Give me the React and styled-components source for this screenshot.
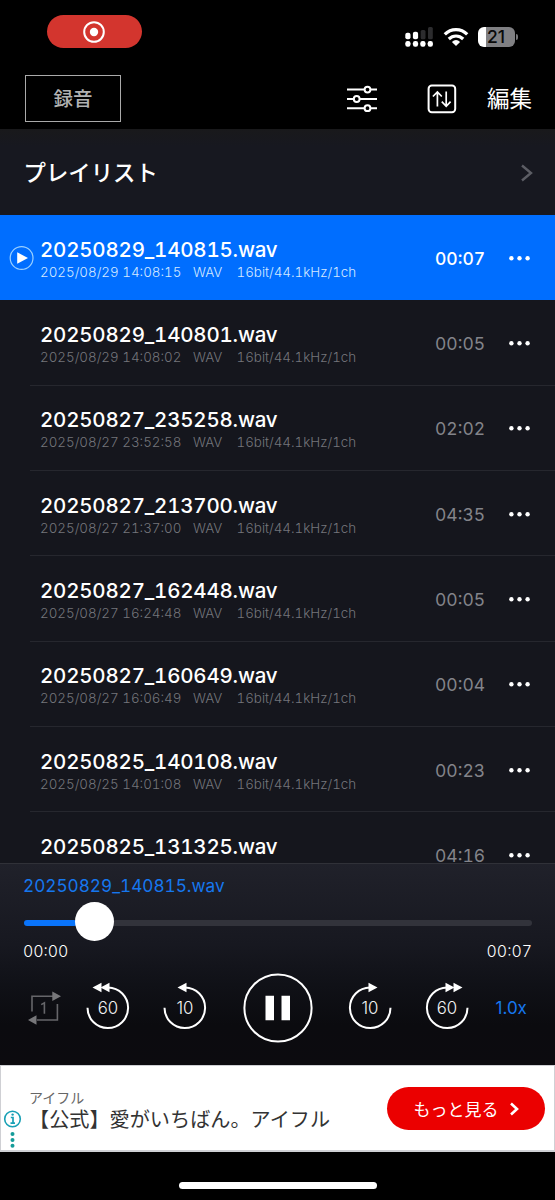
import React from "react";
import styled, { createGlobalStyle } from "styled-components";

const GlobalStyle = createGlobalStyle`
  *, *::before, *::after { box-sizing: border-box; }
  body { margin: 0; background: #000; }
  button { font: inherit; color: inherit; background: none; border: 0; padding: 0; margin: 0; }
  svg { display: block; flex: none; }
`;

const Screen = styled.main`
  width: 555px;
  height: 1200px;
  display: flex;
  flex-direction: column;
  overflow: hidden;
  background: #000;
  color: #fff;
  font-family: Inter, "Noto Sans CJK JP", sans-serif;
  white-space: nowrap;
`;

const StatusBar = styled.div`
  height: 64px;
  flex: none;
  display: flex;
  justify-content: space-between;
  padding: 15px 37px 0 47px;
`;

const RecordingPill = styled.div`
  width: 95px;
  height: 33px;
  border-radius: 17px;
  background: #d3352e;
  display: flex;
  align-items: center;
  justify-content: center;
  padding-right: 1px;
`;

const StatusIcons = styled.div`
  display: flex;
  align-items: flex-start;
  padding-top: 12px;
`;

const Battery = styled.div`
  width: 37px;
  height: 20px;
  margin-left: 9px;
  padding-left: 9px;
  border-radius: 6px;
  background: linear-gradient(90deg, #fff 8px, #808083 8px);
  color: #0a0a0a;
  font-size: 17.5px;
  font-weight: 500;
  line-height: 20px;
`;

const BatteryCap = styled.div`
  width: 2px;
  height: 6px;
  margin: 7px 0 0 1px;
  border-radius: 0 2px 2px 0;
  background: #77777a;
`;

const NavBar = styled.header`
  height: 65px;
  flex: none;
  display: flex;
  align-items: center;
  padding: 4px 23px 0 25px;
`;

const RecordButton = styled.button`
  width: 96px;
  height: 47px;
  border: 1.5px solid #aaa;
  color: #b2b2b2;
  font-size: 19.5px;
  font-weight: 500;
  line-height: 44px;
`;

const NavTools = styled.div`
  margin-left: auto;
  display: flex;
  align-items: center;
`;

const EditButton = styled.button`
  margin-left: 30px;
  font-size: 22.5px;
  line-height: 32px;
`;

const PlaylistRow = styled.div`
  height: 86px;
  flex: none;
  display: flex;
  align-items: center;
  justify-content: space-between;
  padding: 1px 22px 0 23.5px;
  background: linear-gradient(#19191b, #171820 20%, #171820);
`;

const PlaylistTitle = styled.h1`
  margin: 0;
  font-size: 22.4px;
  font-weight: 500;
  line-height: 32px;
`;

const FileList = styled.ul`
  list-style: none;
  margin: 0;
  padding: 0;
  height: 648px;
  flex: none;
  overflow: hidden;
  background: #15161d;
`;

const FileRow = styled.li`
  height: 85.33px;
  display: grid;
  grid-template-columns: 40px 395px 74px 24px;
  align-items: center;
  background: ${(p) =>
    p.$active
      ? "#006eff"
      : "linear-gradient(#26272e, #26272e) 30px 100% / 525px 1px no-repeat"};
`;

const PlaySlot = styled.div`
  padding-left: 9px;
`;

const FileInfo = styled.div`
  padding-top: 3px;
`;

const FileName = styled.div`
  font-size: 20.5px;
  font-weight: 500;
  line-height: 25px;
  letter-spacing: -0.19px;
  font-variant-numeric: tabular-nums;
`;

const FileMeta = styled.div`
  display: grid;
  grid-template-columns: 153px 43.5px auto;
  font-size: 13.4px;
  font-weight: 300;
  line-height: 20px;
  font-variant-numeric: tabular-nums;
  color: ${(p) => (p.$active ? "#d5e9ff" : "#74757b")};
`;

const Duration = styled.div`
  padding-top: 1px;
  font-size: 17.5px;
  font-weight: ${(p) => (p.$active ? 500 : 400)};
  font-variant-numeric: tabular-nums;
  color: ${(p) => (p.$active ? "#fff" : "#83848a")};
`;

const Player = styled.section`
  height: 202px;
  flex: none;
  border-top: 1px solid #303138;
  padding: 9px 23px 0;
  background: linear-gradient(#20212a, #171820 40%, #101117 60%, #0b0b0f 80%, #0c0b0f);
`;

const NowPlaying = styled.div`
  color: #1677ee;
  font-size: 17.2px;
  line-height: 26px;
  font-variant-numeric: tabular-nums;
`;

const Slider = styled.div`
  height: 39px;
  margin: 3px 0 0 1px;
  display: flex;
  align-items: center;
`;

const Track = styled.div`
  height: 6px;
  margin-top: 3px;
  border-radius: 3px;
  background: ${(p) => (p.$played ? "#0a74fa" : "#32333b")};
  width: ${(p) => (p.$played ? "53px" : "auto")};
  flex: ${(p) => (p.$played ? "none" : "1")};
`;

const Knob = styled.div`
  width: 39px;
  height: 39px;
  margin: 0 -2px;
  border-radius: 50%;
  background: #fff;
  flex: none;
  z-index: 1;
`;

const Times = styled.div`
  display: flex;
  justify-content: space-between;
  margin-top: 1px;
  font-size: 15.9px;
  font-weight: 300;
  line-height: 20px;
  font-variant-numeric: tabular-nums;
`;

const Controls = styled.div`
  display: flex;
  align-items: center;
  height: 70px;
  margin-top: 10.5px;
  padding-left: 4px;
`;

const Control = styled.button`
  margin-left: ${(p) => p.$gap}px;
  flex: none;
`;

const Speed = styled.button`
  margin-left: 26.5px;
  color: #1677ee;
  font-size: 17px;
`;

const SkipLabel = styled.text`
  fill: #f4f4f4;
  font-size: 16.8px;
  font-weight: 300;
  text-anchor: middle;
`;

const AdBanner = styled.aside`
  height: 87px;
  flex: none;
  display: flex;
  background: #fff;
  border: solid #cfd0d4;
  border-width: 1px 1px 2px 1px;
  color: #333;
  font-family: "Noto Sans CJK JP", sans-serif;
`;

const AdMarks = styled.div`
  width: 28px;
  padding: 43.5px 0 0 2px;
`;

const AdCopy = styled.div`
  width: 358px;
  padding-top: 22px;
`;

const Advertiser = styled.div`
  font-size: 14px;
  line-height: 18px;
  color: #666;
`;

const AdTitle = styled.div`
  font-size: 20.15px;
  line-height: 25px;
`;

const AdButton = styled.button`
  width: 158px;
  height: 43px;
  margin-top: 21px;
  border-radius: 22px;
  background: #eb0000;
  color: #fff;
  display: flex;
  align-items: center;
  justify-content: center;
  gap: 10px;
  font-size: 17px;
`;

const HomeIndicator = styled.div`
  width: 198px;
  height: 7px;
  margin: 30px 0 0 179px;
  border-radius: 4px;
  background: #fff;
`;

const files = [
  ["20250829_140815.wav", "2025/08/29 14:08:15", "00:07"],
  ["20250829_140801.wav", "2025/08/29 14:08:02", "00:05"],
  ["20250827_235258.wav", "2025/08/27 23:52:58", "02:02"],
  ["20250827_213700.wav", "2025/08/27 21:37:00", "04:35"],
  ["20250827_162448.wav", "2025/08/27 16:24:48", "00:05"],
  ["20250827_160649.wav", "2025/08/27 16:06:49", "00:04"],
  ["20250825_140108.wav", "2025/08/25 14:01:08", "00:23"],
  ["20250825_131325.wav", "2025/08/25 13:13:25", "04:16"],
];

function RecordIcon() {
  return (
    <svg width="24" height="24" fill="none">
      <circle cx="12" cy="12" r="9.8" stroke="#fff" strokeWidth="2" />
      <circle cx="12" cy="12" r="4.2" fill="#fff" />
    </svg>
  );
}

function SignalIcon() {
  return (
    <svg width="28" height="21" fill="#fff">
      <rect x="0.3" y="5.8" width="5.2" height="6.5" rx="2" />
      <rect x="7.9" y="4.8" width="5.2" height="7.5" rx="2" />
      <rect x="15.7" y="3" width="4.8" height="9.3" rx="1.5" fill="#2c2c2e" />
      <rect x="23" y="0" width="4.8" height="12.3" rx="1.5" fill="#2c2c2e" />
      {[0.3, 7.9, 15.3, 22.7].map((x) => (
        <rect key={x} x={x} y="14" width="5.2" height="5.8" rx="2.2" />
      ))}
    </svg>
  );
}

function WifiIcon() {
  return (
    <svg width="26" height="21" fill="none" stroke="#fff" strokeWidth="3.2">
      <path d="M1.8 7.4C8 1 18 1 24.2 7.4" />
      <path d="M5.8 12C10 8 16 8 20.2 12" />
      <path d="M13 19L8.9 15Q13 11.2 17.1 15Z" fill="#fff" stroke="none" />
    </svg>
  );
}

function SlidersIcon() {
  return (
    <svg width="32" height="28" fill="none" stroke="#fff" strokeWidth="2">
      <path d="M0 4.6H17M24 4.6H30M0 14H6M13 14H30M0 23.2H17M24 23.2H30" />
      <circle cx="20.5" cy="4.6" r="2.9" />
      <circle cx="9.7" cy="14" r="2.9" />
      <circle cx="20.5" cy="23.2" r="2.9" />
    </svg>
  );
}

function SortIcon() {
  return (
    <svg width="30" height="30" fill="none" stroke="#fff">
      <rect x="1.6" y="1.6" width="26.6" height="26.6" rx="3.2" strokeWidth="2" />
      <path d="M10.4 22.5V8.2M5.9 12.5L10.4 7.9L14.8 12.5M19.2 7.5V22M14.8 17.7L19.2 22.3L23.6 17.7" strokeWidth="1.7" />
    </svg>
  );
}

function Chevron({ width, height, color, stroke }) {
  return (
    <svg width={width} height={height} fill="none" stroke={color} strokeWidth={stroke}>
      <path d={`M2 1.5L${width - 2} ${height / 2}L2 ${height - 1.5}`} />
    </svg>
  );
}

function PlayingIcon() {
  return (
    <svg width="26" height="26" fill="none">
      <circle cx="12.6" cy="13" r="11.4" stroke="#9bd1ff" strokeWidth="1.2" />
      <path d="M8.2 7.3L19 13L8.2 18.7Z" fill="#fff" />
    </svg>
  );
}

function MoreIcon() {
  return (
    <svg width="24" height="6" fill="#fff">
      <circle cx="2.4" cy="3.2" r="2.2" />
      <circle cx="10.5" cy="3.2" r="2.2" />
      <circle cx="18.6" cy="3.2" r="2.2" />
    </svg>
  );
}

function RepeatIcon() {
  return (
    <svg width="34" height="34" fill="none" stroke="#66666a" strokeWidth="1.6">
      <path d="M5 20.5V5.2H26M30.4 13V29H10" />
      <path d="M25.3 0.5L34 5.3L25.3 10ZM9.5 24.2L1 29L9.5 33.7Z" fill="#77777a" stroke="none" />
      <path d="M14.2 13.6L17.4 11.8V22.8" />
    </svg>
  );
}

function SkipIcon({ seconds, forward }) {
  const double = seconds === 60;
  return (
    <svg width="44" height="51" fill="none">
      <g transform={forward ? "matrix(-1 0 0 1 44 0)" : undefined}>
        <path d="M1.5 25.7A20.3 20.3 0 1 0 22 5.5H18" stroke="#fff" strokeWidth="2" />
        <path d="M14.5 5.5L23.5 0.7V10.3Z" fill="#fff" />
        {double && <path d="M6.5 5.5L15.5 0.7V10.3Z" fill="#fff" />}
      </g>
      <SkipLabel x="22" y="32">{seconds}</SkipLabel>
    </svg>
  );
}

function PauseIcon() {
  return (
    <svg width="70" height="70" fill="none">
      <circle cx="35" cy="35" r="33.6" stroke="#fff" strokeWidth="2" />
      <path d="M22.5 22.7H31V47.3H22.5ZM38.5 22.7H47V47.3H38.5Z" fill="#fff" />
    </svg>
  );
}

function AdChoiceIcon() {
  return (
    <svg width="20" height="40" fill="none">
      <circle cx="9.5" cy="9" r="7.8" stroke="#18a0b5" strokeWidth="1.6" />
      <path d="M7.8 7.5H10V13M7.5 13.2H12" stroke="#18a0b5" strokeWidth="1.7" />
      <circle cx="9.6" cy="4.6" r="1.2" fill="#18a0b5" />
      <g fill="#159c99">
        <circle cx="9.5" cy="24" r="2" />
        <circle cx="9.5" cy="30" r="2" />
        <circle cx="9.5" cy="35.7" r="2" />
      </g>
    </svg>
  );
}

export default function App() {
  return (
    <Screen>
      <GlobalStyle />
      <StatusBar>
        <RecordingPill><RecordIcon /></RecordingPill>
        <StatusIcons>
          <SignalIcon />
          <Control as="span" $gap={10}><WifiIcon /></Control>
          <Battery>21</Battery>
          <BatteryCap />
        </StatusIcons>
      </StatusBar>
      <NavBar>
        <RecordButton>録音</RecordButton>
        <NavTools>
          <SlidersIcon />
          <Control $gap={48}><SortIcon /></Control>
          <EditButton>編集</EditButton>
        </NavTools>
      </NavBar>
      <PlaylistRow>
        <PlaylistTitle>プレイリスト</PlaylistTitle>
        <Chevron width={13} height={18} color="#5c5d64" stroke={2.4} />
      </PlaylistRow>
      <FileList>
        {files.map(([name, date, duration], i) => {
          const active = i === 0;
          return (
            <FileRow key={name} $active={active}>
              <PlaySlot>{active && <PlayingIcon />}</PlaySlot>
              <FileInfo>
                <FileName>{name}</FileName>
                <FileMeta $active={active}>
                  <span>{date}</span>
                  <span>WAV</span>
                  <span>16bit/44.1kHz/1ch</span>
                </FileMeta>
              </FileInfo>
              <Duration $active={active}>{duration}</Duration>
              <MoreIcon />
            </FileRow>
          );
        })}
      </FileList>
      <Player>
        <NowPlaying>{files[0][0]}</NowPlaying>
        <Slider>
          <Track $played />
          <Knob />
          <Track />
        </Slider>
        <Times>
          <span>00:00</span>
          <span>00:07</span>
        </Times>
        <Controls>
          <Control $gap={0}><RepeatIcon /></Control>
          <Control $gap={25}><SkipIcon seconds={60} /></Control>
          <Control $gap={33}><SkipIcon seconds={10} /></Control>
          <Control $gap={36}><PauseIcon /></Control>
          <Control $gap={35}><SkipIcon seconds={10} forward /></Control>
          <Control $gap={33}><SkipIcon seconds={60} forward /></Control>
          <Speed>1.0x</Speed>
        </Controls>
      </Player>
      <AdBanner>
        <AdMarks><AdChoiceIcon /></AdMarks>
        <AdCopy>
          <Advertiser>アイフル</Advertiser>
          <AdTitle>【公式】愛がいちばん。アイフル</AdTitle>
        </AdCopy>
        <AdButton>
          もっと見る
          <Chevron width={10} height={14} color="#fff" stroke={2.6} />
        </AdButton>
      </AdBanner>
      <HomeIndicator />
    </Screen>
  );
}
